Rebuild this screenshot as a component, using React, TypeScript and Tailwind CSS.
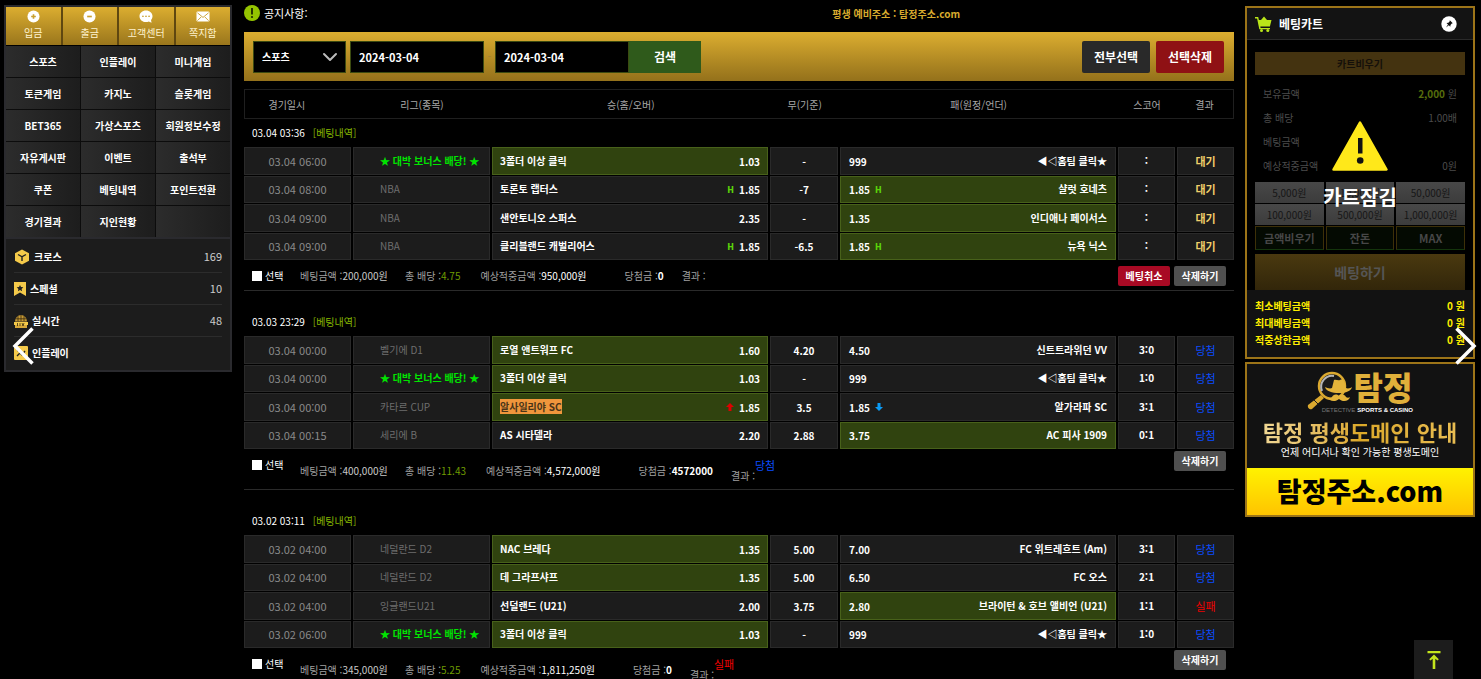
import React from "react";
import { ChevronDown } from "lucide-react";

interface Match {
  time: string;
  league: string;
  home: string;
  homeOdds: string;
  draw: string;
  awayOdds: string;
  away: string;
  score: string;
  result: "대기" | "당첨" | "실패";
  pick: "home" | "away";
  homeMark?: "H" | "up";
  awayMark?: "H" | "down";
  highlight?: boolean;
}

interface BetSlip {
  id: string;
  date: string;
  matches: Match[];
  amount: string;
  odds: string;
  expected: string;
  payout: string;
  outcome: "" | "당첨" | "실패";
  cancelable?: boolean;
}

const BONUS = "★ 대박 보너스 배당! ★";

const slips: BetSlip[] = [
  {
    id: "slip-1",
    date: "03.04 03:36",
    amount: "200,000원",
    odds: "4.75",
    expected: "950,000원",
    payout: "0",
    outcome: "",
    cancelable: true,
    matches: [
      { time: "03.04 06:00", league: BONUS, home: "3폴더 이상 클릭", homeOdds: "1.03", draw: "-", awayOdds: "999", away: "◀◁홈팀 클릭★", score: ":", result: "대기", pick: "home" },
      { time: "03.04 08:00", league: "NBA", home: "토론토 랩터스", homeOdds: "1.85", draw: "-7", awayOdds: "1.85", away: "샬럿 호네츠", score: ":", result: "대기", pick: "away", homeMark: "H", awayMark: "H" },
      { time: "03.04 09:00", league: "NBA", home: "샌안토니오 스퍼스", homeOdds: "2.35", draw: "-", awayOdds: "1.35", away: "인디애나 페이서스", score: ":", result: "대기", pick: "away" },
      { time: "03.04 09:00", league: "NBA", home: "클리블랜드 캐벌리어스", homeOdds: "1.85", draw: "-6.5", awayOdds: "1.85", away: "뉴욕 닉스", score: ":", result: "대기", pick: "away", homeMark: "H", awayMark: "H" },
    ],
  },
  {
    id: "slip-2",
    date: "03.03 23:29",
    amount: "400,000원",
    odds: "11.43",
    expected: "4,572,000원",
    payout: "4572000",
    outcome: "당첨",
    matches: [
      { time: "03.04 00:00", league: "벨기에 D1", home: "로열 앤트워프 FC", homeOdds: "1.60", draw: "4.20", awayOdds: "4.50", away: "신트트라위던 VV", score: "3:0", result: "당첨", pick: "home" },
      { time: "03.04 00:00", league: BONUS, home: "3폴더 이상 클릭", homeOdds: "1.03", draw: "-", awayOdds: "999", away: "◀◁홈팀 클릭★", score: "1:0", result: "당첨", pick: "home" },
      { time: "03.04 00:00", league: "카타르 CUP", home: "알사일리야 SC", homeOdds: "1.85", draw: "3.5", awayOdds: "1.85", away: "알가라파 SC", score: "3:1", result: "당첨", pick: "home", homeMark: "up", awayMark: "down", highlight: true },
      { time: "03.04 00:15", league: "세리에 B", home: "AS 시타델라", homeOdds: "2.20", draw: "2.88", awayOdds: "3.75", away: "AC 피사 1909", score: "0:1", result: "당첨", pick: "away" },
    ],
  },
  {
    id: "slip-3",
    date: "03.02 03:11",
    amount: "345,000원",
    odds: "5.25",
    expected: "1,811,250원",
    payout: "0",
    outcome: "실패",
    matches: [
      { time: "03.02 04:00", league: "네덜란드 D2", home: "NAC 브레다", homeOdds: "1.35", draw: "5.00", awayOdds: "7.00", away: "FC 위트레흐트 (Am)", score: "3:1", result: "당첨", pick: "home" },
      { time: "03.02 04:00", league: "네덜란드 D2", home: "데 그라프샤프", homeOdds: "1.35", draw: "5.00", awayOdds: "6.50", away: "FC 오스", score: "2:1", result: "당첨", pick: "home" },
      { time: "03.02 04:00", league: "잉글랜드U21", home: "선덜랜드 (U21)", homeOdds: "2.00", draw: "3.75", awayOdds: "2.80", away: "브라이턴 & 호브 앨비언 (U21)", score: "1:1", result: "실패", pick: "away" },
      { time: "03.02 06:00", league: BONUS, home: "3폴더 이상 클릭", homeOdds: "1.03", draw: "-", awayOdds: "999", away: "◀◁홈팀 클릭★", score: "1:0", result: "당첨", pick: "home" },
    ],
  },
];

const menu = [
  "스포츠", "인플레이", "미니게임",
  "토큰게임", "카지노", "슬롯게임",
  "BET365", "가상스포츠", "회원정보수정",
  "자유게시판", "이벤트", "출석부",
  "쿠폰", "베팅내역", "포인트전환",
  "경기결과", "지인현황", "",
];

const categories = [
  { name: "크로스", count: "169", icon: "cube" },
  { name: "스페셜", count: "10", icon: "ribbon" },
  { name: "실시간", count: "48", icon: "ball" },
  { name: "인플레이", count: "", icon: "play" },
];

const resultColor = {
  대기: "text-[#f0cf6a]",
  당첨: "text-[#0b4dff]",
  실패: "text-[#f00000]",
};

function QuickIcon({ name }: { name: string }) {
  if (name === "message") {
    return (
      <svg viewBox="0 0 16 14" className="h-[13px] w-4">
        <rect x="1" y="1.5" width="14" height="11" rx="1.5" fill="#fff" />
        <path d="M2 3l6 5 6-5M2 11.500l4-4M14 11.500l-4-4" fill="none" stroke="#c9a030" strokeWidth="1" />
      </svg>
    );
  }
  if (name === "support") {
    return (
      <svg viewBox="0 0 16 14" className="h-[13px] w-4">
        <path d="M8 .5c4 0 7 2.700 7 6.200 0 1.600-.6 3-1.600 4.100l.6 2.900-3-1.300c-.9.4-1.900.6-3 .6-4 0-7-2.800-7-6.300S4 .5 8 .5z" fill="#fff" />
        <g fill="#c9a030">
          <circle cx="4.700" cy="6.700" r=".9" />
          <circle cx="8" cy="6.700" r=".9" />
          <circle cx="11.300" cy="6.700" r=".9" />
        </g>
      </svg>
    );
  }
  return (
    <svg viewBox="0 0 14 14" className="size-[13px]">
      <circle cx="7" cy="7" r="6.500" fill="#fff" />
      <path d={name === "deposit" ? "M4.500 7h5M7 4.500v5" : "M4.500 7h5"} stroke="#c9a030" strokeWidth="1.800" />
    </svg>
  );
}

function CategoryIcon({ name }: { name: string }) {
  switch (name) {
    case "cube":
      return (
        <svg viewBox="0 0 16 16" className="size-4">
          <path d="M8 .5l7 3.800v7.400l-7 3.800-7-3.800V4.300z" fill="#f5ca4a" />
          <path d="M4 5.500l4 2.300 4-2.300M8 7.800V12" fill="none" stroke="#222" strokeWidth="1.400" />
        </svg>
      );
    case "ribbon":
      return (
        <svg viewBox="0 0 12 14" className="h-[14px] w-3">
          <path d="M0 0h12v14l-6-3.500L0 14z" fill="#f5ca4a" />
          <path d="M6 3l1 2.100 2.300.2-1.700 1.600.5 2.300L6 8l-2.100 1.200.5-2.300-1.700-1.600L5 5.100z" fill="#222" />
        </svg>
      );
    case "ball":
      return (
        <svg viewBox="0 0 14 14" className="size-[14px]">
          <path d="M1 7.500a6 6.500 0 0112 0z" fill="#c79a35" />
          <path d="M7 1v6M4 2.200v5M10 2.200v5M1.500 4.800h11" stroke="#3a2c10" strokeWidth=".8" />
          <rect x="0" y="8" width="14" height="3" fill="#f5ca4a" />
          <rect x="1" y="11" width="12" height="3" fill="#d9a93a" />
          <path d="M3.500 9v3M6 9v3M8 9l1 3 1-3" fill="none" stroke="#3a2c10" strokeWidth=".8" />
        </svg>
      );
    default:
      return (
        <svg viewBox="0 0 14 14" className="size-[14px]">
          <rect width="14" height="14" rx="1" fill="#f5ca4a" />
          <path d="M3 4.500h3M3 10l3-3 2 2 3-4" fill="none" stroke="#222" strokeWidth="1.300" />
        </svg>
      );
  }
}

function Sidebar() {
  return (
    <aside className="w-[228px] shrink-0 self-start border-2 border-[#2a2a2e] bg-[#1c1c1c]">
      <nav className="grid grid-cols-4 gap-[2px] border-b border-black bg-[#5f4710]">
        {[
          { label: "입금", icon: "deposit" },
          { label: "출금", icon: "withdraw" },
          { label: "고객센터", icon: "support" },
          { label: "쪽지함", icon: "message" },
        ].map((item) => (
          <button
            key={item.label}
            className="flex h-[38px] cursor-pointer flex-col items-center bg-linear-to-b from-[#dcae30] to-[#9a761c] pt-[3px] text-[10px] leading-5 text-[#fff3cf]"
          >
            <QuickIcon name={item.icon} />
            {item.label}
          </button>
        ))}
      </nav>

      <nav className="grid grid-cols-3 gap-px bg-[#0c0c0c]">
        {menu.map((label, i) => (
          <a
            key={i}
            href="#"
            className="flex h-[31px] items-center justify-center bg-linear-to-r from-[#2c2c2c] to-[#1d1d1d] text-[10px] font-bold text-white"
          >
            {label}
          </a>
        ))}
      </nav>

      <ul className="border-t-2 border-[#2a2a2e] px-2 pt-[2px] pb-[2px]">
        {categories.map((cat) => (
          <li key={cat.name} className="border-b border-[#2c2c2c] last:border-b-0">
            <a href="#" className="flex h-[31px] items-center gap-1 text-[10px] font-bold text-white">
              <CategoryIcon name={cat.icon} />
              {cat.name}
              <span className="ml-auto text-[11px] font-normal text-[#ccc]">{cat.count}</span>
            </a>
          </li>
        ))}
      </ul>
    </aside>
  );
}

function OddsMark({ mark }: { mark?: string }) {
  if (!mark) return null;
  if (mark === "H") {
    return <span className="pt-1 font-['DejaVu_Sans',sans-serif] text-[8px] leading-3 text-[#5ad20a]">H</span>;
  }
  return (
    <svg viewBox="0 0 8 8" className={`size-2 ${mark === "up" ? "text-[#e00000]" : "rotate-180 text-[#0b9bf5]"}`}>
      <path d="M4 0l4 4H5.500v4h-3V4H0z" fill="currentColor" />
    </svg>
  );
}

function Columns() {
  return (
    <colgroup>
      <col className="w-[107px]" />
      <col className="w-[137px]" />
      <col className="w-[276px]" />
      <col className="w-[68px]" />
      <col className="w-[276px]" />
      <col className="w-[57px]" />
      <col className="w-[57px]" />
    </colgroup>
  );
}

const cell = "border border-[#2a2a2a] bg-[#1c1c1c] p-0";
const picked = "border border-[#48611a] bg-[#30430f] p-0";

function MatchRow({ match }: { match: Match }) {
  const bonus = match.league === BONUS;
  return (
    <tr>
      <td className={`${cell} text-center text-[11px] text-[#8a8a8a]`}>{match.time}</td>
      <td className={`${cell} whitespace-nowrap`}>
        <div className={`pl-[26px] ${bonus ? "font-bold text-[#00e400]" : "text-[#6e6e6e]"}`}>{match.league}</div>
      </td>
      <td className={match.pick === "home" ? picked : cell}>
        <div className="flex items-center gap-[5px] px-[7px] font-bold">
          <span className="mr-auto">
            {match.highlight ? <mark className="bg-[#f0963c] text-[#4a3418]">{match.home}</mark> : match.home}
          </span>
          <OddsMark mark={match.homeMark} />
          <span className="pt-[2px]">{match.homeOdds}</span>
        </div>
      </td>
      <td className={`${cell} text-center font-bold`}>
        <div className="pt-[2px]">{match.draw}</div>
      </td>
      <td className={match.pick === "away" ? picked : cell}>
        <div className="flex items-center gap-[5px] px-2 font-bold">
          <span className="pt-[2px]">{match.awayOdds}</span>
          <OddsMark mark={match.awayMark} />
          <span className="ml-auto">{match.away}</span>
        </div>
      </td>
      <td className={`${cell} text-center font-bold`}>{match.score}</td>
      <td className={`${cell} text-center text-[11px] ${resultColor[match.result]} ${match.result === "대기" ? "font-bold" : ""}`}>
        {match.result}
      </td>
    </tr>
  );
}

function Slip({ slip }: { slip: BetSlip }) {
  const settled = slip.outcome !== "";
  return (
    <section className="mb-[17px]">
      <h2 className="flex h-[27px] items-center gap-2 pl-2 text-[10px] text-white">
        {slip.date}
        <span className="text-[#86b800]">[베팅내역]</span>
      </h2>

      <div className="-mx-[2px]">
        <table className="h-[115px] w-full table-fixed border-separate border-spacing-x-[2px] border-spacing-y-px text-[10px] leading-4 text-white">
          <Columns />
          <tbody>
            {slip.matches.map((match, i) => (
              <MatchRow key={i} match={match} />
            ))}
          </tbody>
        </table>
      </div>

      <div className={`flex items-start border-b border-[#2a2a2a] px-2 text-[10px] leading-4 text-[#a0a0a0] ${settled ? "h-10" : "h-[30px]"}`}>
        <label className="flex w-12 items-center gap-[3px] pt-[7px] text-white">
          <input type="checkbox" className="size-[10px] appearance-none bg-white checked:bg-lime-500" />
          선택
        </label>
        <div className={`flex ${settled ? "pt-[13px]" : "pt-[7px]"}`}>
          <span className="w-[105px]">
            베팅금액 :<span className="text-[#c8c8c8]">{slip.amount}</span>
          </span>
          <span className="mr-5">
            총 배당 :<span className="text-[#6f9c00]">{slip.odds}</span>
          </span>
          <span className="mr-[38px]">
            예상적중금액 :<span className="text-white">{slip.expected}</span>
          </span>
          <span className="mr-[18px]">
            당첨금 :<b className="text-white">{slip.payout}</b>
          </span>
        </div>
        <span className={settled ? "pt-[18px]" : "pt-[7px]"}>결과 :</span>
        {slip.outcome && <span className={`pt-[7px] text-[11px] ${resultColor[slip.outcome]}`}>{slip.outcome}</span>}
        <div className={`ml-auto flex gap-1 font-bold text-white ${settled ? "pt-px" : "pt-[5px]"}`}>
          {slip.cancelable && (
            <button className="h-5 w-[52px] cursor-pointer rounded-xs bg-[#a80a24]">베팅취소</button>
          )}
          <button className="h-5 w-[52px] cursor-pointer rounded-xs bg-[#4f4f4f]">삭제하기</button>
        </div>
      </div>
    </section>
  );
}

function History() {
  return (
    <main className="min-w-0 flex-1 pt-px">
      <div className="flex h-[26px] items-center pb-3 text-[11px] whitespace-nowrap text-white">
        <svg viewBox="0 0 16 16" className="mr-1 size-4">
          <circle cx="8" cy="8" r="8" fill="#94c400" />
          <path d="M8 3v6.500" stroke="#1c2600" strokeWidth="1.800" />
          <circle cx="8" cy="12" r="1.100" fill="#1c2600" />
        </svg>
        공지사항:
        <p className="flex-1 pl-[53%] text-[10px] font-bold text-[#d8ab2e]">평생 예비주소 : 탐정주소.com</p>
      </div>

      <form className="flex h-[49px] items-center bg-linear-to-b from-[#dcae30] to-[#94711b] pr-[10px] pl-[9px] text-[11px] font-bold text-white">
        <div className="relative mr-1">
          <select aria-label="종류" className="h-8 w-[93px] appearance-none border border-[#3b4a10] bg-black px-2 text-[10px]">
            <option>스포츠</option>
          </select>
          <ChevronDown className="pointer-events-none absolute top-1 right-1 size-6 text-[#bbb]" strokeWidth={2} />
        </div>
        <input aria-label="시작일" defaultValue="2024-03-04" className="h-8 w-[134px] border border-[#3b4a10] bg-black px-2" />
        <span className="w-[11px] text-center font-normal text-[#a08236]">-</span>
        <input aria-label="종료일" defaultValue="2024-03-04" className="h-8 w-[134px] border border-[#3b4a10] bg-black px-2" />
        <button type="button" className="h-8 w-[72px] cursor-pointer bg-[#2f5a1b] text-xs">검색</button>
        <button type="button" className="ml-auto h-8 w-[68px] cursor-pointer rounded-xs bg-[#292929] text-xs">전부선택</button>
        <button type="button" className="ml-[6px] h-8 w-[68px] cursor-pointer rounded-xs bg-[#8f1114] text-xs">선택삭제</button>
      </form>

      <table className="mt-2 h-[30px] w-full table-fixed border border-[#1f1f1f] text-[10px] text-[#a8a8a8]">
        <Columns />
        <thead>
          <tr>
            <th className="pr-6 font-normal">경기일시</th>
            <th className="font-normal">리그(종목)</th>
            <th className="font-normal">승(홈/오버)</th>
            <th className="font-normal">무(기준)</th>
            <th className="font-normal">패(원정/언더)</th>
            <th className="font-normal">스코어</th>
            <th className="font-normal">결과</th>
          </tr>
        </thead>
      </table>

      {slips.map((slip) => (
        <Slip key={slip.id} slip={slip} />
      ))}
    </main>
  );
}

function Cart() {
  return (
    <section className="border-2 border-[#9c7418] bg-black">
      <header className="flex h-8 items-center gap-[7px] border-b border-[#2a2a2a] bg-[#131313] pr-4 pl-2">
        <svg viewBox="0 0 17 16" className="h-4 w-[17px]" fill="#b9e619">
          <path d="M0 1h3.200l.7 3H6l3-3.500L12 4h4.500l-1.600 6.500H5.300L5.600 12H15v1.300H4.300L2.100 2.500H0z" />
          <circle cx="6.500" cy="14.500" r="1.500" />
          <circle cx="12.800" cy="14.500" r="1.500" />
        </svg>
        <h2 className="text-xs font-bold text-white">베팅카트</h2>
        <button aria-label="고정" className="ml-auto cursor-pointer">
          <svg viewBox="0 0 16 16" className="size-4">
            <circle cx="8" cy="8" r="7.700" fill="#fff" />
            <path d="M8.800 4.300l3 3-1 .3-1.300 1.300-.2 1.900-1.500-1.500L5 11.500l2-3-1.500-1.500 1.900-.2 1.200-1.400z" fill="#111" />
          </svg>
        </button>
      </header>

      <div className="relative px-2 pt-3 text-[10px]">
        <button className="h-[23px] w-full cursor-pointer bg-[#443310] font-bold text-[#15100a]">카트비우기</button>
        <dl className="px-2 pt-[6px] text-[#4c4c4c]">
          <div className="flex h-6 items-center justify-between">
            <dt>보유금액</dt>
            <dd>
              <b className="text-[#566d0c]">2,000</b> 원
            </dd>
          </div>
          <div className="flex h-6 items-center justify-between">
            <dt>총 배당</dt>
            <dd>1.00배</dd>
          </div>
          <div className="flex h-6 items-center justify-between">
            <dt>베팅금액</dt>
          </div>
          <div className="flex h-6 items-center justify-between">
            <dt>예상적중금액</dt>
            <dd>0원</dd>
          </div>
        </dl>
        <div className="mt-[5px] grid grid-cols-3 gap-x-[2px] gap-y-px">
          {["5,000원", "10,000원", "50,000원", "100,000원", "500,000원", "1,000,000원"].map((v) => (
            <button key={v} className="h-[21px] cursor-pointer bg-linear-to-b from-[#484848] to-[#3c3c3c] text-[#161616]">
              {v}
            </button>
          ))}
          {["금액비우기", "잔돈", "MAX"].map((v) => (
            <button key={v} className="h-6 cursor-pointer border border-[#3d3008] border-b-[#14350c] bg-[#040a02] text-[11px] font-bold text-[#474747]">
              {v}
            </button>
          ))}
        </div>
        <button className="mt-1 h-9 w-full cursor-pointer bg-linear-to-b from-[#4a390f] to-[#32260a] text-sm font-bold text-[#555]">
          베팅하기
        </button>

        <div className="absolute inset-0 flex flex-col items-center pt-[81px]">
          <svg viewBox="0 0 56 50" className="h-[50px] w-14">
            <path d="M28 1.500L54.500 48.500h-53z" fill="#ffe81a" stroke="#ffe81a" strokeWidth="2.500" strokeLinejoin="round" />
            <path d="M26 17h4.500v15.500H26z" fill="#111" />
            <circle cx="28.200" cy="39.500" r="3.300" fill="#111" />
          </svg>
          <strong className="mt-3 text-xl leading-[28px] text-white">카트잠김</strong>
        </div>
      </div>

      <dl className="bg-[#121212] px-2 pt-[7px] pb-[9px] text-[10px] font-bold text-[#ffee00]">
        {["최소베팅금액", "최대베팅금액", "적중상한금액"].map((label) => (
          <div key={label} className="flex h-[17px] items-center justify-between">
            <dt>{label}</dt>
            <dd>0 원</dd>
          </div>
        ))}
      </dl>
    </section>
  );
}

function Banner() {
  return (
    <a href="#" className="mt-[3px] block border-2 border-[#9c7418] bg-[#121212] text-center whitespace-nowrap">
      <div className="flex h-[104px] flex-col items-center pt-[6px]">
        <div className="grid grid-cols-[46px_60px] grid-rows-[34px_12px]">
          <svg viewBox="0 0 46 40" className="row-span-2 h-10 w-[46px]">
            <circle cx="25" cy="16" r="13" fill="#1a1a1a" stroke="#dba92f" strokeWidth="2.500" />
            <path d="M15 21a11 11 0 0112-15" fill="none" stroke="#b5b5b5" strokeWidth="2" />
            <path d="M14 25l3 3L5 39c-2 1-5-1-4-4z" fill="#dba92f" />
            <path d="M7 30l4 4" stroke="#1a1a1a" strokeWidth="1" />
            <path d="M25 18l2-8c2-1 4 1 6 0s3-1 4 1l2 7c2 1 5 0 6-1-1 4-6 6-13 6s-13-2-14-6c2 1 5 2 7 1z" fill="#e5b43a" />
            <path d="M32 26c3-3 6-1 7 1 1 1 3 1 4 0-1 5-8 5-11 2-3 3-10 3-11-2 1 1 3 1 4 0 1-2 4-4 7-1z" fill="#e5b43a" />
          </svg>
          <div className="text-[32px] leading-8 font-black text-[#e0b03a]">탐정</div>
          <div className="flex justify-end font-['Liberation_Sans',sans-serif] text-[6px] leading-3 font-bold text-white">
            <span className="mr-[2px] font-normal text-[#777]">DETECTIVE</span> SPORTS &amp; CASINO
          </div>
        </div>
        <div className="bg-linear-to-r from-[#f0d794] via-[#dca928] to-[#e8bd52] bg-clip-text text-[22px] leading-[30px] font-bold text-transparent">
          탐정 평생도메인 안내
        </div>
        <div className="text-[10px] leading-3 text-white">언제 어디서나 확인 가능한 평생도메인</div>
      </div>
      <div className="flex h-[47px] items-center justify-center bg-linear-to-b from-[#fff200] to-[#ffc400] text-[27px] font-black text-black">
        탐정주소.com
      </div>
    </a>
  );
}

export default function App() {
  return (
    <div lang="ko" className="relative flex h-screen min-w-[1100px] overflow-hidden bg-black pt-[5px] pr-[6px] pl-1 font-['Noto_Sans_CJK_KR',sans-serif]">
      <Sidebar />
      <div className="ml-3 flex min-w-0 flex-1">
        <History />
      </div>
      <aside className="ml-[11px] w-[230px] shrink-0 pt-px">
        <Cart />
        <Banner />
      </aside>

      <button aria-label="이전" className="absolute top-[327px] left-3 cursor-pointer text-white">
        <svg viewBox="0 0 22 38" className="h-[38px] w-[22px]">
          <path d="M20.500 1.500L3 19l17.500 17.500" fill="none" stroke="currentColor" strokeWidth="3.500" />
        </svg>
      </button>
      <button aria-label="다음" className="absolute top-[327px] right-1 cursor-pointer text-white">
        <svg viewBox="0 0 22 38" className="h-[38px] w-[22px]">
          <path d="M1.500 1.500L19 19 1.500 36.500" fill="none" stroke="currentColor" strokeWidth="3.500" />
        </svg>
      </button>
      <button aria-label="맨 위로" className="absolute right-7 bottom-0 flex size-[39px] cursor-pointer items-center justify-center bg-[#1c1c1c] text-[#c3e51d]">
        <svg viewBox="0 0 14 20" className="h-5 w-[14px]">
          <path d="M.5 1h13v2.200H.5zM7 4.500l4.800 4.700-1.300 1.300-2.200-1.700V19H5.700V8.800l-2.200 1.700-1.300-1.300z" fill="currentColor" />
        </svg>
      </button>
    </div>
  );
}
